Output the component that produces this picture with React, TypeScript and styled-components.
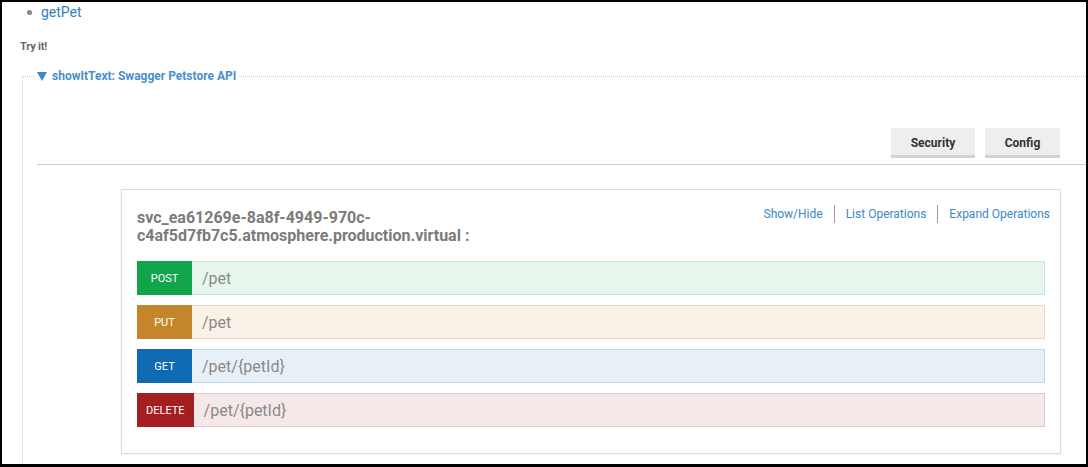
import React from "react";
import styled, { createGlobalStyle } from "styled-components";

const Global = createGlobalStyle`
  html, body { margin: 0; padding: 0; background: #fff; }
  body { font-family: Roboto, "Liberation Sans", Arial, sans-serif; }
  * { box-sizing: border-box; }
`;

const Frame = styled.div`
  width: 1088px;
  height: 467px;
  border: 2px solid #000;
  border-bottom-width: 3px;
  overflow: hidden;
  background: #fff;
`;

const ItemList = styled.ul`
  list-style: none;
  margin: 0;
  padding: 0 0 0 25px;
`;

const Item = styled.li`
  display: flex;
  align-items: center;
  height: 20px;
  gap: 9px;
  font-size: 14px;
  color: #2f7fc1;
`;

const Bullet = styled.span`
  width: 5px;
  height: 5px;
  border-radius: 50%;
  background: #888;
`;

const TryIt = styled.div`
  margin: 18px 0 0 18px;
  font-size: 11px;
  line-height: 14px;
  font-weight: 700;
  color: #666;
  letter-spacing: -0.2px;
`;

const Fieldset = styled.fieldset`
  margin: 15px 0 0 20px;
  width: 1084px;
  border: 1px dotted #c8c8c8;
  padding: 0 0 40px 14px;
  min-width: 0;
`;

const Legend = styled.legend`
  margin-left: -3px;
  padding: 0 3px;
  font-size: 12px;
  line-height: 14px;
  font-weight: 700;
  color: #4a8fcb;
  display: flex;
  align-items: center;
  gap: 5px;
`;

const Tri = styled.span`
  width: 0;
  height: 0;
  border-left: 5px solid transparent;
  border-right: 5px solid transparent;
  border-top: 9px solid #3d86c9;
`;

const Toolbar = styled.div`
  display: flex;
  justify-content: flex-end;
  gap: 10px;
  margin-top: 45px;
  padding-right: 45px;
  padding-bottom: 6px;
  border-bottom: 1px solid #cfcfcf;
`;

const ToolButton = styled.button<{ $w: number }>`
  width: ${(p) => p.$w}px;
  height: 30px;
  border: 0;
  border-bottom: 3px solid #d3d3d3;
  background: #eeeeee;
  font-family: inherit;
  font-size: 12px;
  font-weight: 700;
  color: #333;
  padding: 2px 0 0;
`;

const Box = styled.div`
  margin: 24px 44px 0 84px;
  border: 1px solid #dcdcdc;
  box-shadow: 0 1px 2px rgba(0, 0, 0, 0.06);
  padding: 19px 15px 26px 15px;
`;

const Header = styled.div`
  display: flex;
  justify-content: space-between;
  align-items: flex-start;
`;

const Title = styled.div`
  width: 420px;
  font-size: 16px;
  line-height: 18px;
  font-weight: 700;
  color: #7b7b7b;
`;

const Links = styled.div`
  display: flex;
  margin-right: -5px;
  margin-top: -4px;
`;

const LinkItem = styled.span<{ $first?: boolean }>`
  font-size: 12px;
  line-height: 18px;
  color: #3b88c6;
  padding: 0 11px;
  border-left: ${(p) => (p.$first ? "0" : "1px solid #9a9a9a")};
  &:last-child { padding-right: 0; }
`;

const Ops = styled.div`
  display: flex;
  flex-direction: column;
  gap: 10px;
  margin-top: 16px;
`;

const colors = {
  POST: { label: "#10a54a", bg: "#e7f6ec", border: "#c3e8d1" },
  PUT: { label: "#c5862b", bg: "#faf2e8", border: "#f1d7b4" },
  GET: { label: "#0f6ab4", bg: "#e7f0f7", border: "#bfd7ec" },
  DELETE: { label: "#a41e22", bg: "#f5e8e8", border: "#e8c6c7" },
};

type Method = keyof typeof colors;

const OpRow = styled.div`
  display: flex;
  height: 34px;
`;

const MethodLabel = styled.span<{ $m: Method }>`
  min-width: 55px;
  padding: 0 9px;
  display: flex;
  align-items: center;
  justify-content: center;
  background: ${(p) => colors[p.$m].label};
  color: #fff;
  font-size: 11px;
`;

const PathBox = styled.span<{ $m: Method }>`
  flex: 1;
  display: flex;
  align-items: center;
  padding-left: 10px;
  background: ${(p) => colors[p.$m].bg};
  border: 1px solid ${(p) => colors[p.$m].border};
  border-left: 0;
  font-size: 16px;
  color: #8a8a8a;
`;

const ops: { m: Method; path: string }[] = [
  { m: "POST", path: "/pet" },
  { m: "PUT", path: "/pet" },
  { m: "GET", path: "/pet/{petId}" },
  { m: "DELETE", path: "/pet/{petId}" },
];

export default function App() {
  return (
    <>
      <Global />
      <Frame>
        <ItemList>
          <Item>
            <Bullet />
            getPet
          </Item>
        </ItemList>
        <TryIt>Try it!</TryIt>
        <Fieldset>
          <Legend>
            <Tri />
            showItText: Swagger Petstore API
          </Legend>
          <Toolbar>
            <ToolButton $w={84}>Security</ToolButton>
            <ToolButton $w={75}>Config</ToolButton>
          </Toolbar>
          <Box>
            <Header>
              <Title>
                svc_ea61269e-8a8f-4949-970c-c4af5d7fb7c5.atmosphere.production.virtual :
              </Title>
              <Links>
                <LinkItem $first>Show/Hide</LinkItem>
                <LinkItem>List Operations</LinkItem>
                <LinkItem>Expand Operations</LinkItem>
              </Links>
            </Header>
            <Ops>
              {ops.map((o) => (
                <OpRow key={o.m}>
                  <MethodLabel $m={o.m}>{o.m}</MethodLabel>
                  <PathBox $m={o.m}>{o.path}</PathBox>
                </OpRow>
              ))}
            </Ops>
          </Box>
        </Fieldset>
      </Frame>
    </>
  );
}
